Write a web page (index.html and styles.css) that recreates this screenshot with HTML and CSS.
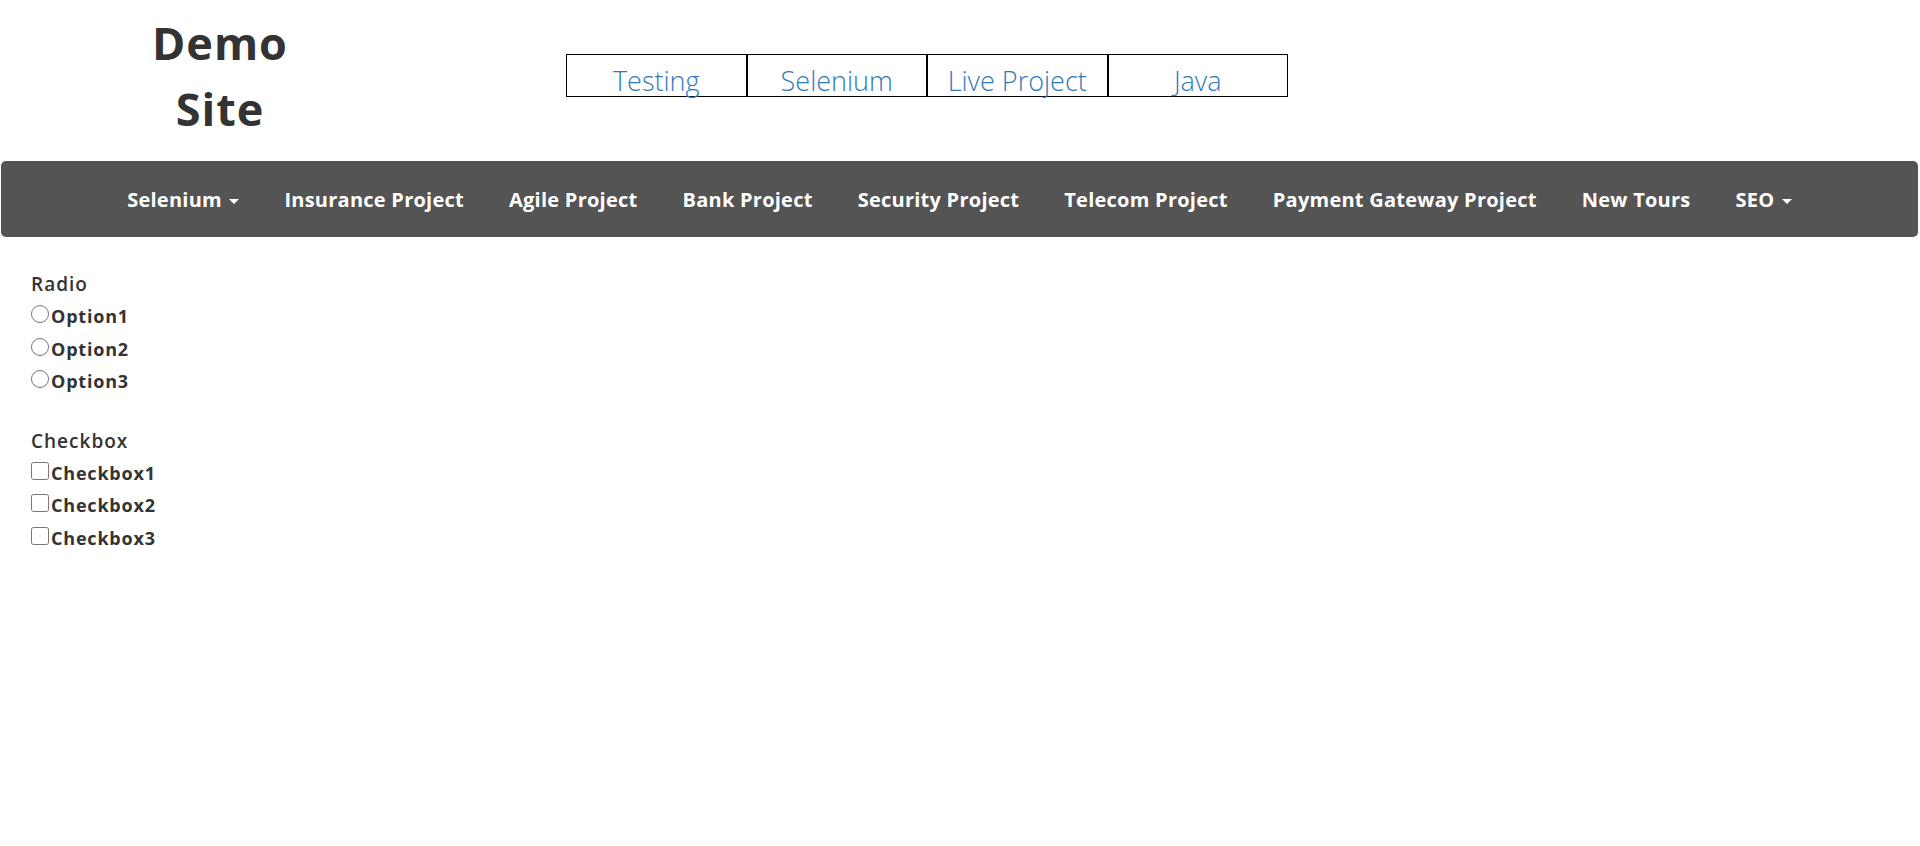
FILE: index.html
```html
<!DOCTYPE html>
<html lang="en">
<head>
<meta charset="utf-8">
<title>Demo Site</title>
<link rel="stylesheet" href="styles.css">
</head>
<body>
<header class="top">
  <div class="brand">
    <h1 class="brand-title">Demo<br>Site</h1>
  </div>
  <div class="tabs">
    <a class="tab" href="#">Testing</a>
    <a class="tab" href="#">Selenium</a>
    <a class="tab" href="#">Live Project</a>
    <a class="tab" href="#">Java</a>
  </div>
</header>
<nav class="navbar">
  <ul class="nav-list">
    <li><a class="nav-link" href="#">Selenium <span class="caret"></span></a></li>
    <li><a class="nav-link" href="#">Insurance Project</a></li>
    <li><a class="nav-link" href="#">Agile Project</a></li>
    <li><a class="nav-link" href="#">Bank Project</a></li>
    <li><a class="nav-link" href="#">Security Project</a></li>
    <li><a class="nav-link" href="#">Telecom Project</a></li>
    <li><a class="nav-link" href="#">Payment Gateway Project</a></li>
    <li><a class="nav-link" href="#">New Tours</a></li>
    <li><a class="nav-link" href="#">SEO <span class="caret"></span></a></li>
  </ul>
</nav>
<main class="content">
  <div class="group">
    <div class="group-title">Radio</div>
    <label class="opt"><input class="radio" type="radio" name="r">Option1</label>
    <label class="opt"><input class="radio" type="radio" name="r">Option2</label>
    <label class="opt"><input class="radio" type="radio" name="r">Option3</label>
  </div>
  <div class="group">
    <div class="group-title">Checkbox</div>
    <label class="opt"><input class="check" type="checkbox">Checkbox1</label>
    <label class="opt"><input class="check" type="checkbox">Checkbox2</label>
    <label class="opt"><input class="check" type="checkbox">Checkbox3</label>
  </div>
</main>
</body>
</html>
```
FILE: styles.css
```css
* { box-sizing: border-box; }
html, body {
  margin: 0;
  padding: 0;
  background: #ffffff;
  color: #333333;
  font-family: "Open Sans", "Noto Sans", "Liberation Sans", sans-serif;
}

.top {
  display: flex;
  align-items: flex-start;
  height: 161px;
}
.brand {
  width: 440px;
  padding-top: 10px;
  text-align: center;
}
.brand-title {
  margin: 0;
  font-size: 45px;
  line-height: 66px;
  font-weight: 700;
  letter-spacing: 1px;
  color: #333333;
}

.tabs {
  display: flex;
  margin-left: 126px;
  margin-top: 54px;
}
.tab {
  display: block;
  width: 180.5px;
  height: 43px;
  padding-top: 8.5px;
  border: 1px solid #000000;
  text-align: center;
  font-size: 27px;
  line-height: 34px;
  font-weight: 300;
  color: #337ab7;
  text-decoration: none;
}

.navbar {
  margin: 0 2px 0 1px;
  height: 76px;
  background: #545454;
  border-radius: 5px;
  display: flex;
  align-items: center;
  justify-content: center;
}
.nav-list {
  list-style: none;
  margin: 0;
  padding: 2px 0 0;
  display: flex;
  align-items: center;
}
.nav-link {
  display: block;
  padding: 0 22.5px;
  font-size: 20px;
  line-height: 28px;
  font-weight: 700;
  letter-spacing: 0.25px;
  color: #ffffff;
  text-decoration: none;
}
.caret {
  display: inline-block;
  width: 0;
  height: 0;
  margin-left: 2px;
  vertical-align: middle;
  border-top: 5px solid #ffffff;
  border-left: 5px solid transparent;
  border-right: 5px solid transparent;
}

.content {
  padding: 31px 0 0 31px;
}
.group {
  display: flex;
  flex-direction: column;
  align-items: flex-start;
}
.group + .group {
  margin-top: 27px;
}
.group-title {
  font-size: 19px;
  line-height: 32.4px;
  font-weight: 600;
  letter-spacing: 1px;
  color: #333333;
}
.opt {
  display: block;
  font-size: 18px;
  line-height: 32.4px;
  font-weight: 700;
  letter-spacing: 0.8px;
  color: #333333;
}
.radio,
.check {
  width: 18px;
  height: 18px;
  margin: 0 2px 2px 0;
  vertical-align: baseline;
}
```
